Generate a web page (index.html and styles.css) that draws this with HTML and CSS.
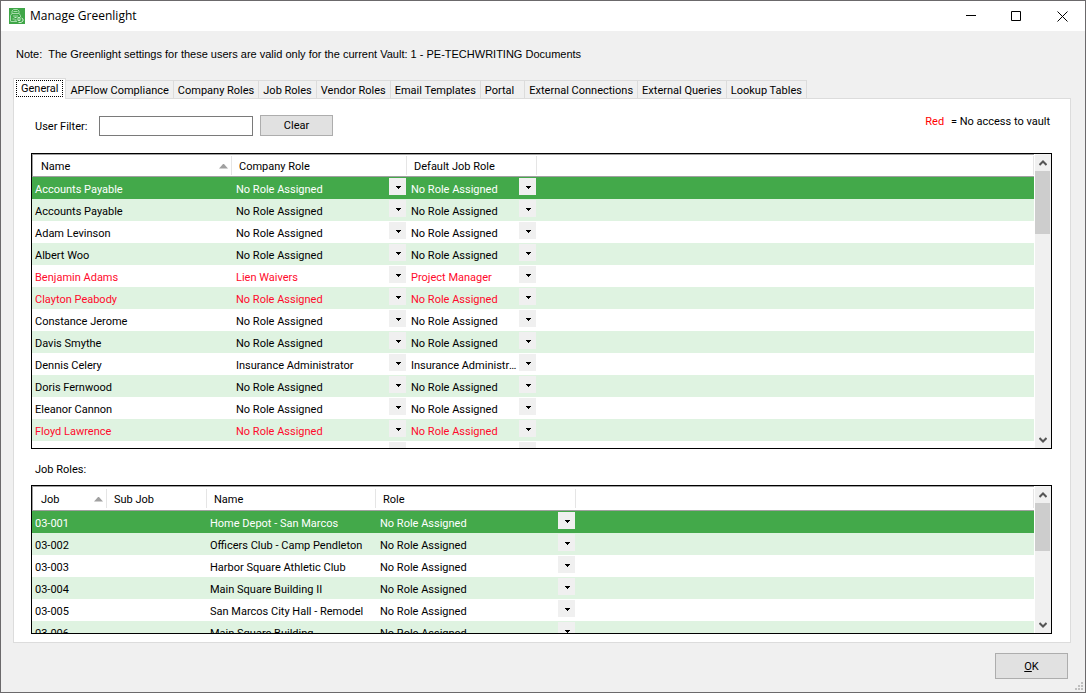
FILE: index.html
```html
<!DOCTYPE html>
<html lang="en">
<head>
<meta charset="utf-8">
<title>Manage Greenlight</title>
<link rel="stylesheet" href="styles.css">
</head>
<body>
<div class="window">
  <header class="titlebar">
    <svg class="app-icon" width="16" height="16" viewBox="0 0 16 16" aria-hidden="true">
      <rect width="16" height="16" fill="#3fa648"/>
      <path d="M1.500 13V7.500L3 5.500V3l1.500-1.500h4L10 3v2.500l1.500 2V9M3 5.500h7M1.500 13.500H8M4.500 3.500h4M4 8h5M3.500 11h2" fill="none" stroke="#a5dba9"/>
      <path d="M5.500 9.500h2M5.500 12h2M9 9.500h2v3H9zM12.500 10l1.500 1v2l-2 1.500H9.500" fill="none" stroke="#c8ebca"/>
    </svg>
    <h1 class="title">Manage Greenlight</h1>
    <div class="window-buttons">
      <button class="window-button" aria-label="Minimize"><svg width="11" height="11" viewBox="0 0 11 11"><path d="M1 4.500h10" stroke="#000"/></svg></button>
      <button class="window-button" aria-label="Maximize"><svg width="11" height="11" viewBox="0 0 11 11"><path d="M.5.5h9v9h-9z" fill="none" stroke="#000"/></svg></button>
      <button class="window-button" aria-label="Close"><svg width="11" height="11" viewBox="0 0 11 11"><path d="M.5.5l10 10M10.500.5l-10 10" stroke="#000"/></svg></button>
    </div>
  </header>
  <main class="content">
    <p class="note">Note:&nbsp; The Greenlight settings for these users are valid only for the current Vault: 1 - PE-TECHWRITING Documents</p>
    <div class="tabs" role="tablist">
      <button class="tab tab-active" role="tab" aria-selected="true"><span class="tab-focus">General</span></button>
      <button class="tab" role="tab">APFlow Compliance</button>
      <button class="tab" role="tab">Company Roles</button>
      <button class="tab" role="tab">Job Roles</button>
      <button class="tab" role="tab">Vendor Roles</button>
      <button class="tab" role="tab">Email Templates</button>
      <button class="tab tab-short" role="tab">Portal</button>
      <button class="tab" role="tab">External Connections</button>
      <button class="tab" role="tab">External Queries</button>
      <button class="tab" role="tab">Lookup Tables</button>
    </div>
    <section class="panel" role="tabpanel">
      <div class="toolbar">
        <label class="filter-label" for="filter">User Filter:</label>
        <input class="filter" id="filter" type="text">
        <button class="button clear">Clear</button>
        <p class="legend"><span class="legend-red">Red</span> = No access to vault</p>
      </div>
      <div class="list list-users">
        <div class="view">
          <table class="grid">
            <colgroup><col class="col-user"><col class="col-company"><col class="col-default"><col></colgroup>
            <thead><tr><th class="sorted">Name</th><th>Company Role</th><th>Default Job Role</th><th></th></tr></thead>
            <tbody id="users"></tbody>
          </table>
        </div>
        <div class="scrollbar">
          <button class="scroll-button" aria-label="Scroll up"><svg width="8" height="6" viewBox="0 0 8 6"><path d="M.5 5L4 1.500 7.500 5" fill="none" stroke="#555" stroke-width="2"/></svg></button>
          <div class="track"><div class="thumb thumb-users"></div></div>
          <button class="scroll-button" aria-label="Scroll down"><svg width="8" height="6" viewBox="0 0 8 6"><path d="M.5 1L4 4.500 7.500 1" fill="none" stroke="#555" stroke-width="2"/></svg></button>
        </div>
      </div>
      <h2 class="caption">Job Roles:</h2>
      <div class="list list-jobs">
        <div class="view">
          <table class="grid grid-jobs">
            <colgroup><col class="col-job"><col class="col-sub"><col class="col-name"><col class="col-role"><col></colgroup>
            <thead><tr><th class="sorted">Job</th><th>Sub Job</th><th>Name</th><th>Role</th><th></th></tr></thead>
            <tbody id="jobs"></tbody>
          </table>
        </div>
        <div class="scrollbar">
          <button class="scroll-button" aria-label="Scroll up"><svg width="8" height="6" viewBox="0 0 8 6"><path d="M.5 5L4 1.500 7.500 5" fill="none" stroke="#555" stroke-width="2"/></svg></button>
          <div class="track"><div class="thumb thumb-jobs"></div></div>
          <button class="scroll-button" aria-label="Scroll down"><svg width="8" height="6" viewBox="0 0 8 6"><path d="M.5 1L4 4.500 7.500 1" fill="none" stroke="#555" stroke-width="2"/></svg></button>
        </div>
      </div>
    </section>
  </main>
  <footer class="footer">
    <button class="button ok"><u>O</u>K</button>
    <svg class="grip" width="8" height="8" viewBox="0 0 8 8" aria-hidden="true"><path d="M6 0h2v2H6zM3 3h2v2H3zM6 3h2v2H6zM0 6h2v2H0zM3 6h2v2H3zM6 6h2v2H6z" fill="#bfbfbf"/></svg>
  </footer>
</div>
<script src="app.js"></script>
</body>
</html>
```
FILE: styles.css
```css
* {
  box-sizing: border-box;
}

body {
  margin: 0;
  background: #f0f0f0;
  color: #000;
  font: 11px/14px Roboto, "Liberation Sans", Arial, sans-serif;
}

button,
input,
select {
  margin: 0;
  color: inherit;
  font: inherit;
}

.window {
  display: flex;
  flex-direction: column;
  height: 100vh;
  min-height: 480px;
  border: 1px solid #6b696b;
}

.titlebar {
  display: flex;
  align-items: center;
  height: 30px;
  padding-left: 8px;
  background: #fff;
}

.title {
  flex: 1;
  margin: 0 0 0 5px;
  font: 12px/16px "Open Sans", "Noto Sans", sans-serif;
}

.window-buttons {
  display: flex;
}

.window-button {
  display: grid;
  place-items: center;
  width: 46px;
  height: 28px;
  padding: 0;
  border: 0;
  background: none;
}

.content {
  display: flex;
  flex: 1;
  flex-direction: column;
  min-height: 0;
  padding: 16px 14px 0 12px;
}

.note {
  margin: 0 3px 17px;
  font-family: "Liberation Sans", Arial, sans-serif;
}

.tabs {
  display: flex;
  align-items: flex-end;
  height: 20px;
}

.tab {
  height: 18px;
  padding: 2px 4px 0;
  border: 1px solid #dcdcdc;
  border-width: 1px 1px 0 0;
  background: #f0f0f0;
  white-space: nowrap;
}

.tab-short {
  padding-right: 10px;
}

.tab-active {
  z-index: 1;
  height: 21px;
  margin-bottom: -1px;
  padding: 1px 2px 3px;
  border-left-width: 1px;
  background: #fff;
}

.tab-focus {
  display: block;
  padding: 1px 4px 0;
  border: 1px dotted #000;
}

.panel {
  display: flex;
  flex: 1;
  flex-direction: column;
  min-height: 0;
  padding: 16px 18px 8px 17px;
  border: 1px solid #dcdcdc;
  background: #fff;
}

.toolbar {
  display: flex;
  align-items: center;
  height: 22px;
  margin-bottom: 16px;
}

.filter-label {
  width: 68px;
  padding: 2px 0 0 4px;
}

.filter {
  width: 154px;
  height: 20px;
  padding: 0 3px;
  border: 1px solid #7a7a7a;
  background: #fff;
}

.button {
  padding: 0;
  border: 1px solid #adadad;
  background: #e1e1e1;
}

.clear {
  align-self: flex-start;
  width: 73px;
  height: 21px;
  margin-left: 7px;
}

.legend {
  margin: 0 2px 8px auto;
}

.legend-red {
  margin-right: 4px;
  color: #f00;
}

.list {
  display: flex;
  min-height: 0;
  border: 1px solid #000;
}

.list-users {
  flex: 2 1 0;
}

.list-jobs {
  flex: 1 1 0;
}

.view {
  flex: 1;
  margin-right: 1px;
  overflow: hidden;
}

.caption {
  margin: 14px 4px 8px;
  font: inherit;
}

.grid {
  width: 100%;
  border-spacing: 0;
  table-layout: fixed;
}

.col-user {
  width: 200px;
}

.col-company {
  width: 175px;
}

.col-default {
  width: 130px;
}

.col-job {
  width: 75px;
}

.col-sub {
  width: 100px;
}

.col-name {
  width: 169px;
}

.col-role {
  width: 200px;
}

.grid th {
  height: 23px;
  padding: 2px 7px 0;
  border: solid #a0a0a0;
  border-width: 1px 0;
  background: linear-gradient(#e5e5e5, #e5e5e5) right center / 1px 19px no-repeat;
  font-weight: normal;
  text-align: left;
}

.grid th:first-child {
  padding-left: 8px;
  border-left-width: 1px;
}

.grid-jobs th {
  height: 25px;
}

.sorted::after {
  float: right;
  width: 9px;
  height: 5px;
  margin: 4px -3px 0 0;
  background: #a0a0a0;
  clip-path: polygon(50% 0, 100% 100%, 0 100%);
  content: "";
}

.grid td {
  height: 22px;
  padding: 4px 3px 0;
  white-space: nowrap;
}

.grid td.role {
  padding: 0;
}

.grid tbody tr:nth-child(even) {
  background: #dff3e1;
}

.grid tbody tr.selected {
  background: #43a94a;
  color: #fff;
}

.denied {
  color: #ff0a2b;
}

.dropdown {
  display: block;
  width: 100%;
  height: 22px;
  padding: 4px 19px 0 4px;
  border: 0;
  border-radius: 0;
  appearance: none;
  background:
    linear-gradient(#000, #000) right 6px top 9px / 5px 1px no-repeat,
    linear-gradient(#000, #000) right 7px top 10px / 3px 1px no-repeat,
    linear-gradient(#000, #000) right 8px top 11px / 1px 1px no-repeat,
    linear-gradient(#f0f0f0, #f0f0f0) right 1px top 1px / 17px 17px no-repeat;
  text-overflow: ellipsis;
}

.scrollbar {
  display: flex;
  flex-direction: column;
  width: 16px;
  background: #f0f0f0;
}

.scroll-button {
  display: grid;
  place-items: center;
  height: 17px;
  padding: 0;
  border: 0;
  background: none;
}

.track {
  flex: 1;
}

.thumb {
  width: 15px;
  background: #cdcdcd;
}

.thumb-users {
  height: 63px;
}

.thumb-jobs {
  height: 48px;
}

.footer {
  display: flex;
  align-items: flex-start;
  justify-content: flex-end;
  height: 49px;
  padding: 10px 2px 2px 0;
}

.ok {
  width: 73px;
  height: 26px;
  margin-right: 7px;
  padding-top: 2px;
}

.grip {
  align-self: flex-end;
}
```
FILE: app.js
```js
const NONE = "No Role Assigned";

const users = [
  ["Accounts Payable", NONE, NONE],
  ["Accounts Payable", NONE, NONE],
  ["Adam Levinson", NONE, NONE],
  ["Albert Woo", NONE, NONE],
  ["Benjamin Adams", "Lien Waivers", "Project Manager", true],
  ["Clayton Peabody", NONE, NONE, true],
  ["Constance Jerome", NONE, NONE],
  ["Davis Smythe", NONE, NONE],
  ["Dennis Celery", "Insurance Administrator", "Insurance Administrator"],
  ["Doris Fernwood", NONE, NONE],
  ["Eleanor Cannon", NONE, NONE],
  ["Floyd Lawrence", NONE, NONE, true],
  ["", "", ""],
];

const jobs = [
  ["03-001", "Home Depot - San Marcos"],
  ["03-002", "Officers Club - Camp Pendleton"],
  ["03-003", "Harbor Square Athletic Club"],
  ["03-004", "Main Square Building II"],
  ["03-005", "San Marcos City Hall - Remodel"],
  ["03-006", "Main Square Building"],
];

const cell = (text) => `<td>${text}</td>`;
const role = (value, label) =>
  `<td class="role"><select class="dropdown" aria-label="${label}"><option>${value}</option></select></td>`;

document.getElementById("users").innerHTML = users
  .map(([name, company, job, denied], i) => {
    const state = i === 0 ? "selected" : denied ? "denied" : "";
    return `<tr class="${state}">${cell(name)}${role(company, "Company Role")}${role(job, "Default Job Role")}<td></td></tr>`;
  })
  .join("");

document.getElementById("jobs").innerHTML = jobs
  .map(([id, name], i) =>
    `<tr class="${i === 0 ? "selected" : ""}">${cell(id)}${cell("")}${cell(name)}${role(NONE, "Role")}<td></td></tr>`)
  .join("");
```
